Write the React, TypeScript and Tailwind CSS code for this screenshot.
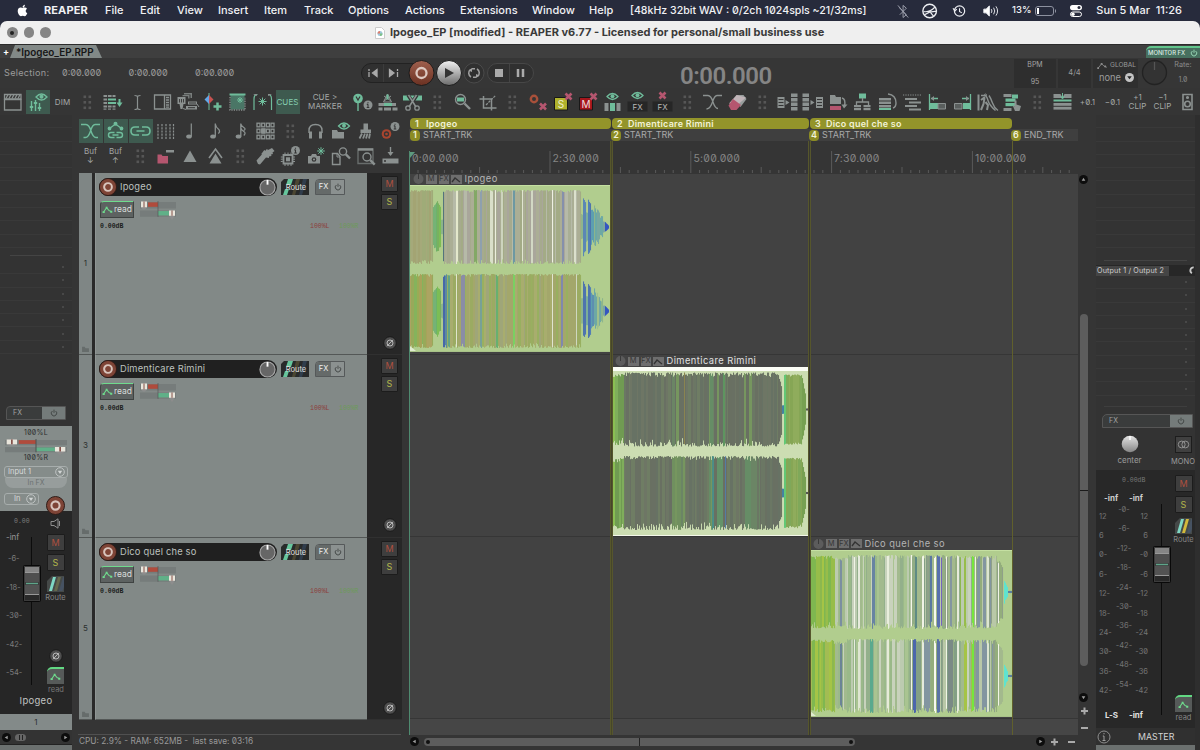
import React from "react";

const G = "#8b9190";
const T = "#6fbc9b";
const R = "#b5566f";
const BG = "#353535";

/* ---------- toolbar icons (25 x 24 cells) ---------- */

const info = (x: number, y: number, r = 4.5) => (
  <g>
    <circle cx={x} cy={y} r={r} fill={G} />
    <path d={`M${x} ${y - 0.8}v3.2M${x - 1.2} ${y - 0.6}h1.2M${x - 1.3} ${y + 2.5}h2.6M${x} ${y - 2.8}v1.1`} stroke={BG} strokeWidth="1.1" fill="none" />
  </g>
);
const eye = (x: number, y: number) => (
  <g>
    <path d={`M${x - 5.5} ${y}q5.5 -6 11 0q-5.5 6 -11 0z`} fill="none" stroke={T} strokeWidth="1.3" />
    <circle cx={x} cy={y - 0.3} r="2" fill={T} />
  </g>
);
const cross = (x: number, y: number) => <path d={`M${x - 3} ${y - 3}l6 6M${x + 3} ${y - 3}l-6 6`} stroke={R} strokeWidth="2.6" />;
const star = (x: number, y: number, r: number) => (
  <path d={`M${x - r} ${y}h${2 * r}M${x} ${y - r}v${2 * r}M${x - r * 0.7} ${y - r * 0.7}l${r * 1.4} ${r * 1.4}M${x + r * 0.7} ${y - r * 0.7}l${-r * 1.4} ${r * 1.4}`} stroke={T} strokeWidth="1" />
);
const mag = (x: number, y: number, r: number, c = G) => (
  <g stroke={c} fill="none">
    <circle cx={x} cy={y} r={r} strokeWidth="1.4" />
    <path d={`M${x + r * 0.8} ${y + r * 0.8}l${r + 0.5} ${r + 0.5}`} strokeWidth="2.4" />
  </g>
);
const rows = (x: number, w: number, ys: number[], h: number, fill = G) => ys.map((y) => <rect key={`${x}-${y}`} x={x} y={y} width={w} height={h} fill={fill} />);

const icons: Record<string, React.ReactNode> = {
  dots: <g fill="#565656">{[7, 12.5, 18].map((y) => [8.5, 13.5].map((x) => <rect key={`${x}${y}`} x={x} y={y - 1.5} width="2.6" height="2.6" />))}</g>,
  clap: (
    <g fill="none" stroke={G} strokeWidth="1.3">
      <path d="M4.500 9.500h16.500v10.500h-16.500z" />
      <path d="M4.500 9V4.500H21V9z" />
      <path d="M6 8.500l2-4M9 8.500l2-4M12 8.500l2-4M15 8.500l2-4M18 8.500l2-4" />
    </g>
  ),
  mixer: (
    <g>
      {eye(16.5, 7)}
      <path d="M6.500 11v10M10.500 10v11M14.500 13v8" stroke={T} strokeWidth="1.4" />
      <path d="M4.800 17h3.400M8.800 13h3.400M12.800 18h3.400" stroke={T} strokeWidth="2.200" />
    </g>
  ),
  gridDown: (
    <g>
      {rows(3.5, 3.6, [5, 8.5, 12, 15.5], 2)}
      {rows(8, 3.6, [5, 15.5], 2)}
      {rows(12.5, 3, [5, 15.5], 2)}
      {rows(8, 8, [8.5, 12], 2, T)}
      {rows(3.5, 3, [18.5], 1.2)}
      {rows(8, 3, [18.5], 1.2)}
      {rows(12.5, 3, [18.5], 1.2)}
      <path d="M19.500 9v4" stroke={T} strokeWidth="2" />
      <path d="M16.500 12.500h6l-3 4.500z" fill={T} />
    </g>
  ),
  ibeam: <path d="M9.500 5.500q3 0 3 1.500v11q0 1.500-3 1.500M15.500 5.500q-3 0-3 1.500M15.500 19.500q-3 0-3-1.500" stroke={G} strokeWidth="1.200" fill="none" />,
  panel: (
    <g fill="none" stroke={G} strokeWidth="1.300">
      <path d="M4.500 5h16v14h-16z" />
      <path d="M14.500 5v14" />
      <path d="M16 7.500h3M16 10h3M16 12.500h3M16 15h3M16 17.200h3" />
    </g>
  ),
  routing: (
    <g fill={G}>
      <path d="M9 3h8v5h-1.500V4.500H9zM7.500 5h7v3.500h-1.400V6.300H7.500z" opacity=".8" />
      <path d="M2.500 7h8v7h-2l-1 5H5.500l-1-5h-2z" />
      <path d="M4.500 9v3.500M6.500 9v3.500M8.500 9v3.500" stroke={BG} strokeWidth=".9" />
      <path d="M13 11.500h9v3h-9zM11 16h11v3.500H11z" />
      <path d="M14 13h7M13 17.700h7" stroke={BG} strokeWidth="1" />
      <path d="M8 18.500l3 1M22 14l2 3" stroke={G} />
    </g>
  ),
  marker: (
    <g>
      <path d="M9 3v17" stroke={T} strokeWidth="1" />
      <path d="M9 5v9L4.500 9.500z" fill="#63a7e8" />
      <path d="M9 5v9l4.500-4.500z" fill="#c65250" />
      <path d="M17.500 12.500v8M13.500 16.500h8" stroke={T} strokeWidth="2.500" />
    </g>
  ),
  selStar: (
    <g>
      <path d="M5.500 4.500h14v15h-14z" fill="#4a7666" />
      <path d="M4.500 4.500h16" stroke={T} strokeWidth="2" />
      <path d="M5 7v13h15V7" stroke={G} fill="none" strokeWidth="1.300" strokeDasharray="1.200 1.200" />
      {star(15, 10, 3)}
    </g>
  ),
  brackets: (
    <g>
      <path d="M7.500 4.500Q4 4.500 4 9v11M18 4.500q3.500 0 3.500 4.500v11" stroke={T} fill="none" strokeWidth="1.200" />
      <path d="M3 4h4v2zM22 4h-4v2z" fill={G} />
      {star(12.5, 11.5, 4)}
    </g>
  ),
  pinInfo: (
    <g>
      <circle cx="8" cy="8.500" r="4.800" fill={T} />
      <path d="M8 13v8" stroke={T} strokeWidth="1.400" fill="none" />
      <path d="M6 6.500l2 3.500 2-3.500" stroke={BG} strokeWidth="1.200" fill="none" />
      {info(18, 15)}
    </g>
  ),
  blocksUp: (
    <g>
      <path d="M3.500 13h9v3h-9zM14 13h7v3h-7zM3.500 17.500h4v3h-4zM9 17.500h7v3H9zM17.500 17.500h5v3h-5z" fill={G} />
      <path d="M9 13h8v3H9z" fill={T} />
      <path d="M12.500 4l4 8h-8zM9 6l7 5M16 6l-7 5" stroke={G} fill="none" />
      <path d="M12.500 4.500v5" stroke={T} strokeWidth="2" />
    </g>
  ),
  scissors: (
    <g>
      <path d="M3 5.500h19v5H3z" fill={T} />
      <path d="M8 5l8.500 13M17 5L8.500 18" stroke={BG} strokeWidth="3.500" />
      <path d="M8.500 5l7.500 12M16.500 5L9 17" stroke={G} strokeWidth="1.500" />
      <circle cx="8" cy="18" r="2.200" fill="none" stroke={G} strokeWidth="1.300" />
      <circle cx="17" cy="18" r="2.200" fill="none" stroke={G} strokeWidth="1.300" />
    </g>
  ),
  zoomSel: (
    <g>
      {mag(10.5, 9.5, 5)}
      <path d="M7 7.500h7v4H7z" fill={T} />
    </g>
  ),
  crop: (
    <g>
      <path d="M8.500 6v12h13M4.500 9h12v11.500" stroke={G} strokeWidth="1.500" fill="none" />
      <path d="M11 15l9.500-9.500" stroke={G} strokeWidth="1.200" strokeDasharray="2.500 1" />
    </g>
  ),
  recX: (
    <g>
      <circle cx="9" cy="9" r="3.200" fill="none" stroke="#a8503a" strokeWidth="2.400" />
      {cross(18, 16.5)}
    </g>
  ),
  soloX: (
    <g>
      <path d="M4.500 7.500h13v12.500h-13z" fill="#b0b22c" stroke="#181818" />
      <text x="11" y="17.500" fontSize="10" textAnchor="middle" fill="#eeeed0">S</text>
      {cross(18.5, 6.5)}
    </g>
  ),
  muteX: (
    <g>
      <path d="M4.500 7.500h13v12.500h-13z" fill="#a5161c" stroke="#181818" />
      <text x="11" y="17.500" fontSize="10" textAnchor="middle" fill="#f0dcdc">M</text>
      {cross(18.5, 6.5)}
    </g>
  ),
  eyeCols: (
    <g>
      {eye(12.5, 6.5)}
      <path d="M4.500 13h4v8h-4z" fill={G} />
      <path d="M10 13h5v8h-5z" fill={T} />
      <path d="M16.500 13h4v8h-4z" fill={G} />
    </g>
  ),
  eyeFx: (
    <g>
      {eye(12.5, 5.5)}
      <path d="M2.500 11.500h20v10h-20z" fill="#262626" />
      <text x="12.500" y="19.700" fontSize="8" textAnchor="middle" fill="#b8b8b8">FX</text>
    </g>
  ),
  crossFx: (
    <g>
      {cross(12.5, 5.5)}
      <path d="M2.500 11.500h20v10h-20z" fill="#262626" />
      <text x="12.500" y="19.700" fontSize="8" textAnchor="middle" fill="#b8b8b8">FX</text>
    </g>
  ),
  xfade: <path d="M3 5.500h5q3 0 5 6.500t5 6.500M22 5.500h-5q-2.500 0-4.500 6.500T6.500 19" stroke={G} strokeWidth="1.300" fill="none" />,
  xfadeOn: <path d="M3 5.500h5q3 0 5 6.500t5 6.500h2M22 5.500h-5q-2.500 0-4.500 6.500T7.500 18.500h-2" stroke={T} strokeWidth="1.400" fill="none" />,
  eraser: (
    <g>
      <path d="M11.500 5h7l3 4-6 8-2-2z" fill="#979d9c" />
      <path d="M11.500 5L4 13.500l8.500 1.500L21 7.500z" fill="#c0b4b8" />
      <path d="M8 9l-4.500 6.500L6 20h5.500l4.500-5z" fill={R} />
    </g>
  ),
  fan: (
    <g>
      <path d="M2.500 7h7v11h-7z" fill={G} />
      <path d="M3.500 9.500h5M3.500 12.500h5M3.500 15.500h5" stroke={BG} />
      <path d="M10.500 10l4 2.500-4 2.500z" fill={G} />
      {rows(16, 6.5, [3.5, 8, 12.5, 17], 3.5)}
    </g>
  ),
  fanIn: (
    <g>
      {rows(2.5, 6.5, [3.5, 8, 12.5, 17], 3.5)}
      <path d="M10.500 10l4 2.500-4 2.500z" fill={G} />
      <path d="M16 7h7v11h-7z" fill={G} />
      <path d="M17 9.500h5M17 12.500h5M17 15.500h5" stroke={BG} />
    </g>
  ),
  folderTurn: (
    <g>
      <path d="M5 5h5l1 2h5v7H5z" fill={G} />
      <path d="M5 16h11v4H5z" fill={R} />
      <path d="M17 8q4 1 2.500 8" stroke={G} fill="none" strokeWidth="1.400" />
      <path d="M16.500 14.500h6l-3.500 4z" fill={G} />
    </g>
  ),
  treeUp: (
    <g>
      <path d="M9 3.500h7v5H9z" fill={T} />
      <path d="M12.500 8v4M6.500 15v-3h12v3" stroke={G} fill="none" strokeWidth="1.300" />
      {rows(4, 7, [15, 18], 2.2)}
      {rows(13.5, 7, [15, 18], 2.2)}
    </g>
  ),
  stackTurn: (
    <g>
      {rows(4, 12, [8, 11.5, 15], 2.5)}
      <path d="M4 19h12" stroke={T} strokeWidth="2" />
      <path d="M13 4q8 1 8 9 0 4-3 5" stroke={G} fill="none" strokeWidth="1.400" />
    </g>
  ),
  indent: (
    <g>
      <path d="M3 5h18" stroke={G} strokeDasharray="1.200 1.200" />
      <path d="M5 9h12M9 12.500h12M5 16h12M9 19.500h12" stroke={G} strokeWidth="2" />
    </g>
  ),
  moveL: (
    <g>
      <path d="M4.500 4v16M6 8.500h7" stroke={T} strokeWidth="1.300" />
      <path d="M6 8.500l3-2.500v5z" fill={G} />
      <path d="M5 13h8v6H5z" fill={T} />
      <path d="M13 13.500h7.500v5.500H13z" fill="#5a5f5e" stroke={G} />
    </g>
  ),
  moveR: (
    <g>
      <path d="M20.500 4v16M12 8.500h7" stroke={T} strokeWidth="1.300" />
      <path d="M19 8.500l-3-2.500v5z" fill={G} />
      <path d="M13 13h8v6h-8z" fill={T} />
      <path d="M4.500 13.500H12V19H4.500z" fill="#5a5f5e" stroke={G} />
    </g>
  ),
  keys: (
    <g stroke={G} fill="none">
      <path d="M3.500 4.500v16" strokeWidth="2" />
      <path d="M6 5.500h4q1.500 0 3 5t7.500 10M14 5.500q2 3 3.500 7.500t5.500 7.500" strokeWidth="1.400" />
      <path d="M6 10l4-3M9.500 8l-1 6-2.500 6M10.500 12l2.500 3-1 5" strokeWidth="2" />
      <circle cx="10.500" cy="5" r="1" />
    </g>
  ),
  tapBlocks: (
    <g>
      {rows(3.5, 8, [4, 18], 3, G)}
      {rows(5.5, 10, [8.5, 13], 3.2, T)}
      <path d="M12 4.500h6v4h-6z" fill={T} />
      <path d="M14.500 10.500v6l-2-1.500 2.500 6h4.500l1.500-5-4.500-1.500v-4z" fill={G} />
    </g>
  ),
  insRows: (
    <g>
      <path d="M3.500 4h7l2 3.500L14.500 4h7v4h-18z" fill={G} />
      <path d="M3.500 9.500h18v2h-18z" fill={T} />
      {rows(3.5, 18, [13, 16.8], 2.8)}
      <path d="M12.500 3v5M10.500 6l2 3 2-3" stroke={T} fill="none" />
    </g>
  ),
  speaker: (
    <g fill="none" stroke={G} strokeWidth="1.600">
      <path d="M8 4.500h9v15H8z" />
      <circle cx="12.500" cy="14" r="2.800" />
      <circle cx="12.500" cy="7.500" r=".8" />
    </g>
  ),
  envLink: (
    <g stroke={T} fill="none" strokeWidth="1.400">
      <path d="M6.500 9.500l6-4.500 6 4.500" />
      <path d="M11.500 13.500H8q-2.500 0-2.500 2.500T8 18.500h3.500M13.500 13.500H17q2.500 0 2.500 2.500T17 18.500h-3.500M9.500 16h6" />
      <circle cx="12.500" cy="4.800" r="1.300" fill={T} />
      <circle cx="6.500" cy="9.500" r="1.200" fill={T} />
      <circle cx="18.500" cy="9.500" r="1.200" fill={T} />
    </g>
  ),
  link: <path d="M11 8H7q-4 0-4 4t4 4h4M14 8h4q4 0 4 4t-4 4h-4M8.500 12h8" stroke={T} fill="none" strokeWidth="1.600" />,
  gridLines: <path d="M5 5v15M9 5v15M13 5v15M17 5v15M20.500 5v15" stroke={G} strokeWidth="1.200" strokeDasharray="2.200 1" />,
  quarter: (
    <g>
      <ellipse cx="11" cy="17.500" rx="2.800" ry="2" fill={G} />
      <path d="M13.300 4.500v13" stroke={G} strokeWidth="1.200" />
    </g>
  ),
  eighth: (
    <g>
      <ellipse cx="10" cy="17.500" rx="2.800" ry="2" fill={G} />
      <path d="M12.300 4.500v13M12.300 5q.5 3 3 5t0 4.500" stroke={G} strokeWidth="1.300" fill="none" />
    </g>
  ),
  sixteenth: (
    <g>
      <ellipse cx="10.500" cy="17.500" rx="2.800" ry="2" fill={G} />
      <path d="M12.800 4.500v13M12.800 5q.5 2 3 3.500t0 3M12.800 9q.5 2 3 3.500t0 4" stroke={G} strokeWidth="1.300" fill="none" />
    </g>
  ),
  pads: (
    <g fill="none" stroke={G} strokeWidth="1.300">
      {[6, 12, 18].map((y) => [5.5, 10.2, 14.9, 19.5].map((x) => <rect key={`${x}${y}`} x={x - 1.5} y={y - 1.8} width="3" height="3.600" />))}
      <rect x="9" y="10" width="3" height="4" fill={G} />
    </g>
  ),
  phones: (
    <g stroke={G} fill="none">
      <path d="M6 14v-2.500q0-6 6.500-6t6.500 6V14" strokeWidth="1.400" />
      <path d="M7.500 12.500v7M17.500 12.500v7" strokeWidth="3" />
    </g>
  ),
  folderEye: (
    <g>
      <path d="M4 11h5l1 2h6v6.500H4z" fill={G} />
      {eye(16, 7)}
    </g>
  ),
  brush: (
    <g fill={G}>
      <path d="M10.500 4.500h4.500v6h3v3.500H7.500v-3.500h3z" />
      <path d="M9 14.500l-2.500 5M12 14.500l-2 5M14.500 14.500l-1.500 5M17 14.500l-1 5" stroke={G} strokeWidth="1.800" />
    </g>
  ),
  recInfo: (
    <g>
      <circle cx="8.500" cy="15" r="4.800" fill="#a8452f" />
      <circle cx="8.500" cy="15" r="2" fill="none" stroke={BG} strokeWidth="1.300" />
      {info(17, 7.5)}
    </g>
  ),
  foldRed: (
    <g>
      <path d="M4.500 10.500h4l1 1.500h5.500v7.500H4.500z" fill={R} />
      <path d="M13 6h8v2.500h-8z" fill={G} />
    </g>
  ),
  tri: <path d="M12 6.500L18.500 18h-13z" fill={G} />,
  triDbl: (
    <g>
      <path d="M12.500 9.500L18.500 19.500h-12z" fill={G} />
      <path d="M6 14l6.500-9 6.500 9" stroke={G} strokeWidth="1.600" fill="none" />
    </g>
  ),
  guitar: (
    <g fill={G}>
      <path d="M3.500 16.500L11 8l8-4 2.500 3-2 1.500.5 1.500-2 .5.500 1.500-2.500.500v1.500l-3-.5-6 7-2-.5z" />
      <path d="M9 10.500l3-4M12 9l2.500-3.500" stroke={G} strokeWidth="1.800" />
    </g>
  ),
  chipInfo: (
    <g>
      <path d="M5.500 11h9v8.500h-9z" fill="none" stroke={G} strokeWidth="1.800" />
      <path d="M8 13.300h4v4H8z" fill={G} />
      <path d="M7 8.500v2M10 8.500v2M13 8.500v2M7 20v2M10 20v2M13 20v2M2.800 13h2M2.800 15.200h2M2.800 17.500h2M15 13h2M15 15.200h2M15 17.500h2" stroke={G} />
      {info(17.5, 6.5)}
    </g>
  ),
  camStar: (
    <g>
      <path d="M5 12h3l1-2h4l1 2h3v7.500H5z" fill={G} />
      <circle cx="11" cy="15.500" r="2.300" fill={BG} />
      <circle cx="11" cy="15.500" r="1.100" fill={G} />
      {star(18, 7, 3.8)}
    </g>
  ),
  docMag: (
    <g>
      <path d="M4.500 9.500h5l2.500 3v8H4.500z" fill="none" stroke={G} strokeWidth="1.400" />
      <path d="M9 10v3h3" fill="none" stroke={G} />
      {mag(15, 7.5, 3.6)}
    </g>
  ),
  winMag: (
    <g>
      <path d="M5 5h15v14.500H5z" fill="none" stroke="#686d6c" strokeWidth="1.400" />
      <path d="M5 5.500h15" stroke={G} strokeWidth="2.400" />
      <circle cx="14" cy="13" r="4.500" fill={BG} />
      {mag(14, 13, 4)}
    </g>
  ),
  dlDrive: (
    <g>
      <path d="M12.500 3v8" stroke={G} strokeWidth="1.400" />
      <path d="M9.500 8h6l-3 4z" fill={G} />
      <path d="M4.500 14.500h16v5h-16z" fill={G} />
      <circle cx="7" cy="17" r="1" fill={BG} />
    </g>
  ),
};

const ON = ["mixer", "xfadeOn", "envLink", "link"];

function Cell({ id }: { id: string }) {
  if (id.startsWith("t:")) {
    const [, a, b] = id.split(":");
    const cues = a === "CUES";
    return (
      <div className={`flex h-6 shrink-0 flex-col items-center justify-center ${a === "CUE >" ? "w-[50px]" : "w-[25px]"}`}>
        <div className={`flex flex-col items-center justify-center text-[8px] leading-[9px] tracking-[0.1px] whitespace-nowrap ${cues ? "h-6 w-6 bg-[#3e5a4f] text-[#84cdb0]" : "text-[#a4a8a7]"}`}>
          <span>{a}</span>
          {b && <span>{b}</span>}
        </div>
      </div>
    );
  }
  return (
    <div className="flex h-6 w-[25px] shrink-0 items-center justify-center">
      <div className={`flex h-6 w-6 items-center justify-center ${ON.includes(id) ? "bg-[#3e5a4f]" : ""}`}>
        <svg viewBox="0 0 25 24" className="h-6 w-[25px] shrink-0">{icons[id]}</svg>
      </div>
    </div>
  );
}

const row1 = ["clap", "mixer", "t:DIM", "dots", "gridDown", "ibeam", "panel", "routing", "marker", "selStar", "brackets", "t:CUES", "t:CUE >:MARKER", "pinInfo", "blocksUp", "scissors", "dots", "zoomSel", "crop", "dots", "recX", "soloX", "muteX", "eyeCols", "eyeFx", "crossFx", "dots", "xfade", "eraser", "dots", "fan", "fanIn", "folderTurn", "treeUp", "stackTurn", "indent", "moveL", "moveR", "keys", "tapBlocks", "dots", "insRows", "t:+0.1", "t:−0.1", "t:+1:CLIP", "t:−1:CLIP", "speaker"];
const row2 = ["xfadeOn", "envLink", "link", "gridLines", "quarter", "eighth", "sixteenth", "pads", "dots", "phones", "folderEye", "brush", "recInfo"];
const row3 = ["t:Buf:↓", "t:Buf:↑", "dots", "foldRed", "tri", "triDbl", "dots", "guitar", "chipInfo", "camStar", "docMag", "winMag", "dlDrive"];

/* ---------- small controls ---------- */

const Rec = ({ size = 17 }: { size?: number }) => (
  <svg viewBox="0 0 20 20" style={{ width: size, height: size }} className="shrink-0">
    <circle cx="10" cy="10" r="9.500" fill="#7e4436" stroke="#2b1a16" />
    <circle cx="10" cy="10" r="4.300" fill="none" stroke="#d8c4bc" strokeWidth="2.200" />
  </svg>
);
const Power = ({ c = "#3d4241" }: { c?: string }) => (
  <svg viewBox="0 0 10 10" className="h-[8px] w-[8px]">
    <path d="M3 2.500a3.400 3.400 0 1 0 4 0M5 .8v4" stroke={c} fill="none" strokeWidth="1.100" />
  </svg>
);
const Sq = ({ t, big }: { t: "M" | "S"; big?: boolean }) => (
  <div className={`flex items-center justify-center rounded-[1px] border border-[#1c1c1c] bg-[#3e3e3e] ${t === "M" ? "text-[#b0503f]" : "text-[#b3b64b]"} ${big ? "h-[17px] w-[18px] text-[9px]" : "h-4 w-[17px] text-[9px]"}`}>{t}</div>
);
const Phase = () => (
  <svg viewBox="0 0 14 14" className="h-[14px] w-[14px]">
    <circle cx="7" cy="7" r="6.300" fill="#4e4e4e" stroke="#1a1a1a" />
    <circle cx="7" cy="7" r="3" fill="none" stroke="#b8b8b8" />
    <path d="M4 10.200l6-6.400" stroke="#b8b8b8" />
  </svg>
);
const Env = () => (
  <svg viewBox="0 0 12 10" className="h-[9px] w-[11px] shrink-0">
    <path d="M1.500 8L5 3l2.500 3L10.500 7.500" fill="none" stroke="#6fdb8d" strokeWidth="1.200" />
    <path d="M.5 7h2.500v2H.5zM4 2h2v2H4zM9 6.500h2.300v2H9z" fill="#6fdb8d" />
  </svg>
);
const ReadSq = () => (
  <div className="flex h-[17px] w-[17px] items-center justify-center rounded-tl-[5px] border-t-2 border-[#62d983] bg-[#565a59]"><Env /></div>
);
const RouteSq = ({ bright }: { bright?: boolean }) => (
  <svg viewBox="0 0 18 16" className="h-4 w-[18px]">
    <path d="M5 0h12v16H0V5z" fill="#454948" />
    <path d="M2 15L6 1h3L5 15z" fill="#7fd8c4" />
    <path d="M7 15l4-14h3l-4 14z" fill={bright ? "#d3b93b" : "#66684c"} />
    <path d="M12 15l4-14h1v10l-1.500 4z" fill="#465262" />
  </svg>
);
const Pan = ({ w, h }: { w: number; h: number }) => (
  <svg viewBox="0 0 36 18" style={{ width: w, height: h }} preserveAspectRatio="none">
    <path d="M0 1h36v6H0zM0 9h36v6H0z" fill="#767c7b" />
    <path d="M8 1.300h10v4.200H8z" fill="#b04b3c" />
    <path d="M18 9.500h11v4.200H18z" fill="#60b088" />
    <path d="M18 0v15" stroke="#4e5352" strokeWidth=".6" />
    <path d="M1 .5h6v6l-2 1.500H3L1 6.500zM29 9h6v5l-3 4-3-4z" fill="#8d8d8d" />
    <path d="M1 .5h6v5.500H1zM29 9h6v5h-6z" fill="#e9e6dc" />
    <path d="M4 .5v5.500M32 9v5" stroke="#6c2c26" strokeWidth=".8" />
  </svg>
);
const Fader = () => (
  <svg viewBox="0 0 18 37" className="h-[37px] w-[18px]">
    <rect x=".5" y=".5" width="17" height="36" rx="1" fill="#3c3c3c" stroke="#090909" />
    <path d="M2 2h14v5H2z" fill="#858585" />
    <path d="M2 8h14v9H2z" fill="#4f4f4f" />
    <path d="M2 20h14v9H2z" fill="#535353" />
    <path d="M2 30h14v5H2z" fill="#292929" />
    <path d="M2 7.500h14M2 29.500h14" stroke="#b0b0b0" strokeWidth=".8" />
    <path d="M3 18.500h12" stroke="#5ea58a" strokeWidth="1.400" />
  </svg>
);
const Arrow = ({ d }: { d: "l" | "r" | "u" | "d" }) => (
  <svg viewBox="0 0 10 10" className="h-[9px] w-[9px] shrink-0">
    <circle cx="5" cy="5" r="5" fill="#0d0d0d" />
    <path d={{ l: "M6.300 3v4L3 5z", r: "M3.700 3v4L7 5z", u: "M3 6.300h4L5 3z", d: "M3 3.700h4L5 7z" }[d]} fill="#a0a0a0" />
  </svg>
);
const Drop = () => (
  <svg viewBox="0 0 10 10" className="h-[10px] w-[10px]">
    <circle cx="5" cy="5" r="4.300" fill="none" stroke="#bfc4c3" />
    <path d="M2.800 3.800h4.400L5 7z" fill="#d2d6d5" />
  </svg>
);

/* ---------- waveforms ---------- */

function rng(seed: number) {
  let s = seed;
  return () => {
    s = (s * 1664525 + 1013904223) % 4294967296;
    return s / 4294967296;
  };
}
type Seg = { to: number; a: number; b?: number; j?: number; p: string[] };
function Channel({ segs, seed, cy, h, accents, jag }: { segs: Seg[]; seed: number; cy: number; h: number; accents: [number, number, string][]; jag: number }) {
  const r = rng(seed);
  const out: React.ReactNode[] = [];
  let x = 0;
  for (const s of segs) {
    const from = x;
    const j = s.j ?? jag;
    while (x < s.to) {
      const w = Math.min(s.to - x, 1 + Math.floor(r() * 3));
      const c = s.p[Math.floor(r() * s.p.length)];
      for (let i = 0; i < w; i++) {
        const f = (x + i - from) / (s.to - from);
        const amp = s.a + ((s.b ?? s.a) - s.a) * f;
        const up = amp * h * (1 - r() * r() * j * 0.6);
        const dn = amp * h * (1 - r() * r() * j);
        const ac = accents.find(([ax, aw]) => x + i >= ax && x + i < ax + aw);
        if (amp > 0) out.push(<rect key={x + i} x={x + i} y={cy - up} width="1.050" height={up + dn} fill={ac ? ac[2] : c} />);
      }
      x += w;
    }
  }
  return <g>{out}</g>;
}

const tan = ["#a5a97a", "#a3a473", "#a6b07f", "#9fab78"];
const gold = ["#a7a35a", "#9aab55", "#aca462", "#85b35c", "#98a95a"];
const mist = ["#abae95", "#a6aa8e", "#a9a69b", "#a3ab86", "#b6baa8", "#a9af95"];
const moss = ["#9bab62", "#a3a76b", "#98b060", "#9fa679", "#a8ad6e"];
const slate = ["#6b7764", "#697063", "#6f7d64", "#677264", "#6e7665", "#697062"];
const fern = ["#70905f", "#6b8565", "#76965f", "#668d66"];
const lime = ["#97bd4a", "#a5c446", "#8cb84f", "#a3bc53", "#7fb750"];
const pale = ["#a9c491", "#bccbb0", "#9ab989", "#a2ba8e", "#c8d2bc", "#93b08b"];
const blueish = ["#93ad85", "#839f85", "#a3b98d", "#8396a0", "#b9c8a8", "#93ad7c", "#8fa088"];

const tailSegs: Seg[] = [
  { to: 173, a: 0.35, j: 0.3, p: ["#8fb58c"] },
  { to: 176, a: 0.8, b: 0.62, j: 0.2, p: ["#5b87b5", "#4e74ae"] },
  { to: 178, a: 0.4, j: 0.3, p: ["#7cae98"] },
  { to: 181, a: 0.74, b: 0.6, j: 0.15, p: ["#4e74ae", "#527fb6"] },
  { to: 184, a: 0.5, b: 0.4, j: 0.3, p: ["#5d9fb0", "#5d8fb0"] },
  { to: 187, a: 0.62, b: 0.3, j: 0.5, p: ["#6da8a5", "#8cb58c"] },
  { to: 190, a: 0.5, b: 0.38, j: 0.5, p: ["#79a8a0", "#9fc08c"] },
  { to: 193, a: 0.3, b: 0.4, j: 0.6, p: ["#6da8a5", "#8cb58c"] },
  { to: 195, a: 0.15, j: 0.3, p: ["#7ba5a0"] },
  { to: 199, a: 0.13, b: 0.02, p: ["#3456c0"] },
];
const c1: Seg[] = [
  { to: 23, a: 1, p: tan },
  { to: 27, a: 0.55, b: 0.7, p: ["#76b276", "#6cb36a"] },
  { to: 31, a: 0.7, b: 0.5, p: ["#7cbd55", "#79b060"] },
  { to: 33, a: 0.2, p: ["#8db58a"] },
  { to: 34, a: 0.98, p: ["#54747c"] },
  { to: 171, a: 1, p: mist },
  ...tailSegs,
];
const c1b: Seg[] = c1.map((s, i) => (i === 0 ? { ...s, p: gold } : i === 5 ? { ...s, p: moss } : s));
const c2: Seg[] = [
  { to: 3, a: 0.9, p: ["#8abf52"] }, { to: 12, a: 0.96, p: ["#709b52", "#7fae5b"] }, { to: 60, a: 1, p: slate }, { to: 74, a: 1, p: [...slate, ...fern] }, { to: 92, a: 1, p: slate }, { to: 108, a: 1, p: fern.concat(slate) },
  { to: 130, a: 1, p: slate }, { to: 148, a: 1, p: fern.concat(slate) }, { to: 166, a: 1, p: slate }, { to: 170, a: 0.98, b: 0.6, p: slate }, { to: 172, a: 0.12, p: ["#4682a0"] },
  { to: 190, a: 0.95, j: 0.12, p: ["#86a655", "#7fa85a", "#8fac5c"] }, { to: 194, a: 0.85, b: 0.3, j: 0.1, p: ["#76a052"] }, { to: 196, a: 0.03, p: ["#555"] },
];
const c3: Seg[] = [
  { to: 25, a: 0.98, p: lime }, { to: 37, a: 0.93, p: pale }, { to: 100, a: 1, p: pale }, { to: 148, a: 1, p: blueish }, { to: 164, a: 0.97, p: lime.concat(pale) }, { to: 187, a: 0.98, p: blueish }, { to: 193, a: 0.9, b: 0.7, p: blueish },
  { to: 194, a: 0, p: ["#fff"] }, { to: 198, a: 0.32, b: 0.08, p: ["#5fe3cf"] }, { to: 202, a: 0.03, p: ["#5a7fa0"] },
];

const items = [
  {
    n: 1, name: "Ipogeo", left: 1, w: 200, pt: 12, h: 167, bg: "#b1cd8e", c: [42, 126], h2: 37, top: c1, bot: c1b, seed: 7, jag: 0.14,
    at: [[46, 2, "#e4e8cc"], [64, 3, "#83a866"], [70, 2, "#8ea0ae"], [80, 3, "#d9dfc9"], [85, 1, "#eceedd"], [91, 2, "#cdd4bd"], [103, 2, "#6d98a2"], [112, 1, "#e0e5d0"], [121, 2, "#d2d8c4"], [142, 1, "#eef0e2"], [152, 2, "#8590ac"], [164, 2, "#dbe0cc"]],
    ab: [[33, 2, "#4768a8"], [35, 2, "#5b8aa0"], [38, 2, "#62a385"], [46, 1, "#e0e4cc"], [51, 4, "#8a8da6"], [70, 2, "#78a196"], [86, 2, "#67b070"], [103, 2, "#7ad062"], [142, 1, "#dfe4d0"], [151, 2, "#8088ae"], [166, 1, "#ced7c0"]],
  },
  {
    n: 3, name: "Dimenticare Rimini", left: 203, w: 197, pt: 12, h: 169, bg: "#ccddb2", c: [42.5, 126], h2: 37, top: c2, bot: c2, seed: 21, jag: 0.24,
    at: [[0, 1, "#a5c944"], [72, 1, "#8a8450"], [111, 2, "#5e9560"], [172, 2, "#62c775"]],
    ab: [[0, 1, "#4a91a5"], [100, 2, "#4c8e86"], [105, 6, "#64936a"], [113, 1, "#557ba5"], [172, 2, "#62c775"]],
  },
  {
    n: 5, name: "Dico quel che so", left: 401, w: 202, pt: 13, h: 167, bg: "#b1cd8e", c: [42, 126], h2: 37, top: c3, bot: c3, seed: 33, jag: 0.22,
    at: [[30, 2, "#7b8fa0"], [44, 1, "#f0f3e6"], [48, 2, "#e6ebdc"], [62, 3, "#6883a2"], [77, 2, "#e9eedd"], [101, 1, "#f4f6ea"], [105, 2, "#5f8a84"], [112, 2, "#f0f3e6"], [120, 2, "#5a78a0"], [124, 2, "#f6f8ee"], [127, 3, "#586fae"], [131, 1, "#7564c0"], [136, 1, "#f0f3e6"], [147, 2, "#e6ebdc"], [162, 2, "#76e63c"], [165, 1, "#eef6da"], [177, 2, "#dde6d2"], [188, 1, "#f0f3e6"]],
    ab: [[30, 2, "#6b8496"], [44, 1, "#e6ebdc"], [48, 2, "#dfe6d2"], [60, 3, "#5aa98e"], [77, 2, "#e6ebd8"], [101, 1, "#f0f3e6"], [103, 3, "#4b66ac"], [112, 2, "#e6ebdc"], [124, 2, "#f6f8ee"], [127, 3, "#5a73a4"], [136, 1, "#f0f3e6"], [138, 5, "#7b8a86"], [147, 2, "#e6ebdc"], [162, 2, "#76e63c"], [177, 2, "#dde6d2"], [188, 1, "#f0f3e6"]],
  },
];

/* ---------- track control panel ---------- */

function Track({ n, name }: { n: number; name: string }) {
  return (
    <div className={`flex w-[323px] ${n === 3 ? "h-[183px]" : "h-[182px]"}`}>
      <div className="flex w-[13px] flex-col items-center border-b border-[#535756] bg-[#7f8685] pt-[83px] text-[8px] leading-[14px] text-[#2b2f2e]">
        {n}
        <svg viewBox="0 0 8 7" className="mt-[76px] h-[6px] w-[7px]"><path d="M0 1h3l1 1.500h4V7H0z" fill="#666c6b" /></svg>
      </div>
      <div className="w-[3px] bg-[#2a2a2a]" />
      <div className="flex w-[272px] flex-col border-b border-l border-[#535756] border-l-[#909695] bg-[#828987] pl-[3px]">
        <div className="mt-[5px] flex h-[18px] items-center">
          <div className="flex h-[18px] w-[178px] items-center rounded-full bg-[#202020] pr-px">
            <Rec size={18} />
            <span className="ml-[3px] grow text-[9.3px] tracking-[0.2px] text-[#bdc0bf]">{name}</span>
            <svg viewBox="0 0 18 18" className="h-[17px] w-[17px]"><circle cx="9" cy="9" r="8" fill="#666" stroke="#a8a8a8" strokeWidth="1.200" /><path d="M9 1v5" stroke="#fff" strokeWidth="2" /></svg>
          </div>
          <div className="ml-[4px] flex h-4 w-[28px]">
            <svg viewBox="0 0 28 16" className="h-4 w-7">
              <path d="M3 0h25v16H0V3z" fill="#282a2a" />
              <path d="M5 6l2-6h5l-2 6zM2 16l2-6h4l-2 6z" fill="#66c59c" />
              <path d="M15 0h4l-5 16h-3z" fill="#4b4632" />
              <path d="M22 0h4l-5 16h-3z" fill="#303d4c" />
              <text x="15" y="11.300" fontSize="7.500" textAnchor="middle" fill="#e0e0e0">Route</text>
            </svg>
          </div>
          <div className="ml-[6px] flex h-4 w-[30px] overflow-hidden rounded-tl-[4px] border border-[#55595a] bg-[#8b9190]">
            <div className="flex w-[15px] items-center justify-center bg-[#656a69] text-[7.5px] text-[#eee]">FX</div>
            <div className="flex grow items-center justify-center"><Power /></div>
          </div>
        </div>
        <div className="mt-[5px] flex h-[17px] items-start">
          <div className="ml-px flex h-[17px] w-[34px] items-center justify-center gap-px rounded-tl-[4px] border border-[#3f4342] border-t-[#6fdb8d] bg-[#5d6261] text-[8.5px] text-[#dadddc]"><Env />read</div>
          <div className="ml-[6px]"><Pan w={36} h={19} /></div>
        </div>
        <div className="mt-[4px] flex h-[10px] items-center pl-px font-['Liberation_Mono'] text-[6.5px] font-bold text-[#1b1e1d]">
          <span className="w-[210px]">0.00dB</span>
          <span className="w-[29px] font-normal text-[#8c3f3c]">100%L</span>
          <span className="font-normal text-[#6d9a5a]">100%R</span>
        </div>
      </div>
      <div className="flex w-[35px] flex-col items-center border-b border-[#303030] bg-[#272727] pt-[3px] pl-[10px]">
        <Sq t="M" />
        <div className="h-[2px]" />
        <Sq t="S" />
        <div className="mt-[126px]"><Phase /></div>
      </div>
    </div>
  );
}

/* ---------- mixer pieces ---------- */

const Slots = ({ n, dots }: { n: number; dots?: boolean }) => (
  <>
    {Array.from({ length: n }, (_, i) => (
      <div key={i} className="flex h-[13.3px] items-center justify-end border-b border-[#393939] bg-[#333333] pr-[8px]">
        {dots && <div className="h-[2px] w-[2px] bg-[#484848]" />}
      </div>
    ))}
  </>
);

function Strip() {
  return (
    <div className="flex w-[72px] shrink-0 flex-col bg-[#333333]">
      <div className="h-[137px] overflow-hidden"><Slots n={11} /></div>
      <div className="mx-[10px] h-[4px] border-b border-[#444]" />
      <div className="mt-[5px] h-[145px] overflow-hidden"><Slots n={7} dots /></div>
      <div className="ml-[6px] flex h-[14px] w-[60px] shrink-0 items-center rounded-tl-[4px] border border-[#555] bg-[#3a3c3c] text-[7px] text-[#a0a3a2]">
        <span className="w-[35px] pl-[6px]">FX</span>
        <div className="flex h-full grow items-center justify-center bg-[#747b7a]"><Power /></div>
      </div>
      <div className="mt-[6px] flex h-[85px] flex-col bg-[#858c8a] text-[#2b2e2d]">
        <div className="pt-[2px] text-center text-[7px] leading-[9px] tracking-[0.3px]">100%L</div>
        <div className="mt-[2px] flex h-[15px] justify-center"><Pan w={62} h={16} /></div>
        <div className="text-center text-[7px] leading-[8px] tracking-[0.3px]">100%R</div>
        <div className="mx-[4px] mt-[4px] flex h-3 items-center justify-between rounded-[3px] border border-[#a7adac] pr-[2px] pl-[3px] text-[7.5px] text-[#d8dbda]">Input 1<Drop /></div>
        <div className="mx-[5px] h-[10px] rounded-b-[8px] bg-[#979d9c] text-center text-[7px] leading-[9px] text-[#6c7271]">In FX</div>
        <div className="mt-[5px] ml-[4px] flex h-3 w-[35px] items-center justify-between rounded-[3px] border border-[#a7adac] pr-[2px] pl-[9px] text-[7.5px] text-[#d8dbda]">In<Drop /></div>
      </div>
      <div className="flex h-[203px] flex-col bg-[#262626]">
        <div className="flex h-[174px]">
          <div className="w-[22px] pt-[5px] text-[7.5px] text-[#7d7d7d]">
            <div className="h-[15px] pl-[14px] font-['Liberation_Mono'] text-[6.5px] leading-[11px] whitespace-nowrap">0.00</div>
            <div className="h-[22px] pl-[6px] text-[8px] leading-[12px] text-[#999]">-inf</div>
            {["-6-", "-18-", "-30-", "-42-", "-54-"].map((v, i) => (
              <div key={v} className={`leading-[12px] whitespace-nowrap ${i ? "h-[28.6px] pl-[6px]" : "h-[28.6px] pl-[8px]"}`}>{v}</div>
            ))}
          </div>
          <div className="flex w-[19px] flex-col items-center pt-[26px]">
            <div className="h-[28px] w-px shrink-0 bg-[#0c0c0c]" />
            <div className="shrink-0"><Fader /></div>
            <div className="h-[83px] w-px shrink-0 bg-[#0c0c0c]" />
          </div>
          <div className="flex w-[29px] flex-col items-center">
            <div className="relative -top-[15px] -mb-[15px]"><Rec size={19} /></div>
            <svg viewBox="0 0 12 11" className="mt-[3px] h-[11px] w-3"><path d="M1 3.500h3L8 .8v9.400L4 7.500H1zM9.500 3v5" fill="none" stroke="#8f8f8f" /></svg>
            <div className="mt-[5px]"><Sq t="M" big /></div>
            <div className="mt-[3px]"><Sq t="S" big /></div>
            <div className="mt-[5px]"><RouteSq /></div>
            <div className="text-[7.5px] leading-[11px] text-[#858585]">Route</div>
            <div className="mt-[46px]"><Phase /></div>
            <div className="mt-[4px]"><ReadSq /></div>
          </div>
        </div>
        <div className="h-[10px] pl-[48px] text-[7.5px] leading-[9px] text-[#777]">read</div>
        <div className="text-center text-[9.5px] leading-[12px] tracking-[0.3px] text-[#c0c2c1]">Ipogeo</div>
      </div>
      <div className="h-4 bg-[#838a89] text-center text-[8px] leading-4 text-[#2d302f]">1</div>
      <div className="flex h-[15px] items-center justify-between border-b border-[#222] px-[2px]">
        <div className="flex items-center gap-[4px]"><Arrow d="l" /><div className="flex h-[7px] w-[11px] justify-center gap-[2px] rounded-full bg-[#666] py-px"><div className="w-px bg-[#222]" /><div className="w-px bg-[#222]" /></div></div>
        <Arrow d="r" />
      </div>
      <div className="h-[5px] bg-[#6b706f]" />
    </div>
  );
}

const outer = ["12", "6", "0-", "6-", "12-", "18-", "24-", "30-", "36-", "42-"];
const outerR = ["12", "6", "-0", "-6", "-12", "-18", "-24", "-30", "-36", "-42"];
const inner = ["-0-", "-6-", "-12-", "-18-", "-24-", "-30-", "-36-", "-42-", "-48-", "-54-"];

function Master() {
  return (
    <div className="flex w-[104px] shrink-0 flex-col border-r-[5px] border-[#2e2e2e] bg-[#333333]">
      <div className="h-[142px] overflow-hidden"><Slots n={11} /></div>
      <div className="mx-[8px] h-[4px] border-b border-[#444]" />
      <div className="mt-[4px] flex h-[11px] items-center justify-between bg-[#272727]">
        <div className="h-[10px] w-[73px] bg-[#454545] pl-[1px] text-[7.2px] leading-[10px] tracking-[0.15px] whitespace-nowrap text-[#cfcfcf]">Output 1 / Output 2</div>
        <svg viewBox="0 0 8 10" className="h-[9px] w-[8px]"><path d="M7 1.500a3.500 3.500 0 0 0-2 6.500" stroke="#c8c8c8" strokeWidth="2" fill="none" /></svg>
      </div>
      <div className="h-[130px] overflow-hidden"><Slots n={9} dots /></div>
      <div className="mx-[8px] h-px bg-[#3e3e3e]" />
      <div className="mt-[7px] ml-[6px] flex h-[14px] w-[91px] items-center rounded-tl-[5px] border border-[#565656] bg-[#3a3c3c] text-[7px] text-[#a0a3a2]">
        <span className="w-[67px] pl-[6px]">FX</span>
        <div className="flex h-full grow items-center justify-center bg-[#747b7a]"><Power /></div>
      </div>
      <div className="flex h-[42px] pt-[7px]">
        <div className="flex w-[67px] flex-col items-center text-[8px] leading-[14px] text-[#9b9b9b]">
          <svg viewBox="0 0 18 18" className="h-[18px] w-[18px]">
            <defs><linearGradient id="knob" x1="0" y1="0" x2="0" y2="1"><stop offset="0" stopColor="#e4e4e4" /><stop offset="1" stopColor="#868686" /></linearGradient></defs>
            <circle cx="9" cy="9" r="8.300" fill="url(#knob)" /><path d="M9 1v4" stroke="#fff" strokeWidth="1.500" />
          </svg>
          center
        </div>
        <div className="flex w-[32px] flex-col items-center pl-[8px] text-[7.5px] leading-[14px] text-[#9b9b9b]">
          <div className="mt-px mb-[2px] flex h-[17px] w-[17px] shrink-0 items-center justify-center border border-[#1d1d1d] bg-[#404040]">
            <svg viewBox="0 0 14 10" className="h-[9px] w-[13px]"><circle cx="5" cy="5" r="3.800" fill="none" stroke="#999" /><circle cx="9" cy="5" r="3.800" fill="none" stroke="#999" /></svg>
          </div>
          MONO
        </div>
      </div>
      <div className="flex h-[258px] bg-[#282828]">
        <div className="flex w-[54px] flex-col">
          <div className="pt-[6px] pl-[26px] font-['Liberation_Mono'] text-[6.5px] leading-[10px] whitespace-nowrap text-[#777]">0.00dB</div>
          <div className="flex justify-between pt-[6px] pr-[7px] pl-[8px] text-[8px] leading-3 font-bold text-[#ccc]"><span>-inf</span><span>-inf</span></div>
          <div className="flex h-[204px] text-[7.5px] text-[#757575]">
            <div className="w-[19px] pt-[2.5px] pl-[3px]">{outer.map((v, i) => <div key={i} className="flex h-[19.4px] items-center">{v}</div>)}</div>
            <div className="-mt-[4px] w-[18px]">{inner.map((v, i) => <div key={i} className="flex h-[19.4px] items-center justify-center whitespace-nowrap">{v}</div>)}</div>
            <div className="w-[15px] pt-[2.5px]">{outerR.map((v, i) => <div key={i} className="flex h-[19.4px] items-center justify-end whitespace-nowrap">{v}</div>)}</div>
          </div>
          <div className="flex justify-between pt-px pr-[7px] pl-[9px] text-[8px] leading-3 font-bold whitespace-nowrap text-[#e0e0e0]"><span>L-S</span><span>-inf</span></div>
        </div>
        <div className="flex w-[23px] flex-col items-center pt-[34px]">
          <div className="h-[42px] w-px bg-[#0c0c0c]" />
          <Fader />
          <div className="h-[132px] w-px bg-[#0c0c0c]" />
        </div>
        <div className="flex w-[21px] flex-col items-center pt-[5px] text-[7.5px] leading-[12px] text-[#858585]">
          <Sq t="M" big />
          <div className="h-[4px]" />
          <Sq t="S" big />
          <div className="mt-[5px]"><RouteSq bright /></div>
          <span>Route</span>
          <div className="mt-[149px]"><ReadSq /></div>
          <span>read</span>
        </div>
      </div>
      <div className="flex h-[17px] items-center bg-[#303030]">
        <svg viewBox="0 0 14 14" className="ml-[1px] h-[14px] w-[14px]"><circle cx="7" cy="7" r="6" fill="none" stroke="#8d8d8d" /><path d="M7 6v4.500M5.800 6H7M5.500 10.500h3M7 3v1.300" stroke="#9d9d9d" fill="none" /></svg>
        <span className="ml-[27px] text-[8.8px] leading-[14px] text-[#d4d4d4]">MASTER</span>
      </div>
      <div className="h-[5px] bg-[#6b706f]" />
    </div>
  );
}

/* ---------- arrange view ---------- */

const Badge = ({ n }: { n: number }) => <span className="flex h-[11px] w-[10px] items-center justify-center rounded-[4px] bg-[#8c8c24] text-[9px] font-semibold text-[#f2f2d8]">{n}</span>;

function Ruler() {
  const ticks = Array.from({ length: 76 }, (_, i) => i);
  return (
    <svg viewBox="0 0 669 32" className="h-8 w-[669px] shrink-0 bg-[#353535]">
      {ticks.map((i) => (
        <path key={i} d={`M${(i * 8.8 + 0.2).toFixed(1)} ${i % 16 === 0 ? 9 : i % 8 === 0 ? 25 : 28}V31`} stroke="#5a5a5a" strokeWidth="1" />
      ))}
      {["0:00.000", "2:30.000", "5:00.000", "7:30.000", "10:00.000"].map((t, i) => (
        <text key={t} x={[3, 143.5, 284.5, 425, 566][i]} y="20" fontSize="10.500" letterSpacing="0.200" fill="#858585">{t}</text>
      ))}
      <path d="M0 10h6L1 16z" fill="#5d9a7e" />
    </svg>
  );
}

function Item({ it, i }: { it: (typeof items)[number]; i: number }) {
  return (
    <div className="h-[182px] border-b border-[#363636]" style={{ paddingLeft: it.left }}>
      <div className="flex items-center gap-[2px] pl-[3px] text-[#b4b4b4]" style={{ height: it.pt }}>
        <svg viewBox="0 0 10 10" className="h-[10px] w-[11px]"><circle cx="5" cy="5" r="5" fill="#5c5c5c" /><path d="M5 0v5" stroke="#3a3a3a" /></svg>
        {["M", "FX"].map((t) => <span key={t} className="flex h-[9px] w-[10.5px] items-center justify-center bg-[#6e6e6e] text-[7.5px] text-[#373737]">{t}</span>)}
        <span className="flex h-[9px] w-[10.5px] items-center justify-center bg-[#6e6e6e]"><svg viewBox="0 0 10 9" className="h-[9px] w-[10px]"><path d="M1 7l3-4 2.500 2L9 7" stroke="#333" fill="none" strokeWidth="1.300" /></svg></span>
        <span className={`ml-[1px] text-[9.3px] leading-[12px] tracking-[0.45px] whitespace-nowrap ${i === 1 ? "text-[#e0e0e0]" : ""}`}>{it.name}</span>
      </div>
      <svg viewBox={`0 0 ${it.w} ${it.h}`} style={{ width: it.w, height: it.h }} className="block">
        <rect width={it.w} height={it.h} fill={it.bg} />
        <Channel segs={it.top} seed={it.seed} cy={it.c[0]} h={it.h2} accents={it.at as [number, number, string][]} jag={it.jag} />
        <Channel segs={it.bot} seed={it.seed + 50} cy={it.c[1]} h={it.h2} accents={it.ab as [number, number, string][]} jag={it.jag} />
        <rect width={it.w} height={i === 1 ? 4 : 1} fill={i === 1 ? "#fbfdf6" : "#c5e0a2"} />
        <rect y={it.h - 1} width={it.w} height="1" fill={i === 1 ? "#f4f8ea" : "#a9c389"} />
        {i !== 1 && <path d={`M0 ${it.h - 6}v5h6z`} fill="#e0ebd0" />}
      </svg>
    </div>
  );
}

const regions = [["1", "Ipogeo", "w-[201px]"], ["2", "Dimenticare Rimini", "w-[197px]"], ["3", "Dico quel che so", "w-[202px]"]];

function Arrange() {
  return (
    <div className="relative flex w-[669px] shrink-0 flex-col">
      <div className="mt-[3px] flex h-[11px] shrink-0 gap-px pl-px">
        {regions.map(([n, t, w]) => (
          <div key={n} className={`flex h-[10.5px] items-center rounded-[4px] bg-[#93942a] pl-[5px] text-[9px] font-semibold tracking-[0.25px] text-[#f2f2d6] ${w}`}>
            <span className="w-[11px]">{n}</span>{t}
          </div>
        ))}
      </div>
      <div className="flex h-3 shrink-0 bg-[#3f3f3f] pl-px text-[9px] text-[#a9a9a9]">
        <div className="flex w-[201px] items-center gap-[3px]"><Badge n={1} />START_TRK</div>
        <div className="flex w-[198px] items-center gap-[3px]"><Badge n={2} />START_TRK</div>
        <div className="flex w-[202px] items-center gap-[3px]"><Badge n={4} />START_TRK</div>
        <div className="flex items-center gap-[3px]"><Badge n={6} />END_TRK</div>
      </div>
      <div className="h-px shrink-0" />
      <Ruler />
      <div className="flex h-[561px] flex-col bg-[#424242]">
        <div className="-mt-px">{items.map((it, i) => <Item key={it.n} it={it} i={i} />)}</div>
        <div className="grow bg-[#464646]" />
      </div>
      <div className="absolute top-[36px] bottom-[15px] left-0 w-px bg-[#4f8b70]" />
      <div className="absolute top-[26px] bottom-[15px] left-[201px] w-[3px] border-x border-[#56562c] bg-[#46462a]" />
      <div className="absolute top-[26px] bottom-[15px] left-[399px] w-[3px] border-x border-[#56562c] bg-[#3a3a30]" />
      <div className="absolute top-[26px] bottom-[15px] left-[603px] w-px bg-[#60602c]" />
      <div className="flex h-[13px] items-center">
        <div className="ml-px"><Arrow d="l" /></div>
        <div className="ml-[5px] flex h-[8px] w-[431px] items-center justify-between rounded-full bg-[#5d5d5d] px-[2px]">
          <div className="h-[4px] w-[4px] rounded-full bg-[#111]" /><div className="h-2 w-px bg-[#222]" /><div className="h-[4px] w-[4px] rounded-full bg-[#111]" />
        </div>
        <div className="ml-[181px]"><Arrow d="r" /></div>
        <svg viewBox="0 0 28 8" className="ml-[5px] h-2 w-7"><path d="M1 4h7M4.500 .5v7M18 4h7" stroke="#aaa" strokeWidth="2" /></svg>
      </div>
    </div>
  );
}

function VScroll() {
  return (
    <div className="flex w-[18px] shrink-0 flex-col">
      <div className="flex w-[11px] flex-col items-center">
        <div className="mt-[60px]"><Arrow d="u" /></div>
        <div className="mt-[130px] flex h-[352px] w-[8px] items-center rounded-full bg-[#5d5d5d]"><div className="h-px w-full bg-[#1b1b1b]" /></div>
        <div className="mt-[27px]"><Arrow d="d" /></div>
        <svg viewBox="0 0 8 30" className="mt-[5px] h-[30px] w-2"><path d="M1 4h7M4.500 .5v7M1 21h7" stroke="#aaa" strokeWidth="2" /></svg>
      </div>
    </div>
  );
}

/* ---------- top bars ---------- */

function MenuBar() {
  return (
    <div className="flex h-[21px] shrink-0 items-center bg-[#272b3c] text-[11px] text-[#f0f1f4]">
      <svg viewBox="0 0 384 512" className="ml-[17px] h-[13px] w-[11px]" fill="#fff"><path d="M318.700 268.700c-.2-36.700 16.400-64.400 50-84.800-18.800-26.900-47.200-41.700-84.700-44.600-35.500-2.800-74.300 20.700-88.500 20.700-15 0-49.400-19.700-76.400-19.700C63.300 141.200 4 184.800 4 273.500q0 39.300 14.400 81.200c12.800 36.700 59 126.700 107.200 125.200 25.200-.6 43-17.900 75.800-17.900 31.800 0 48.300 17.900 76.400 17.900 48.600-.7 90.400-82.500 102.600-119.300-65.200-30.700-61.700-90-61.700-91.900zm-56.600-164.200c27.300-32.400 24.800-61.900 24-72.500-24.100 1.400-52 16.400-67.900 34.900-17.500 19.800-27.800 44.300-25.600 71.900 26.100 2 49.900-11.400 69.500-34.300z" /></svg>
      <span className="ml-[16px] w-[61px] font-bold tracking-[0.1px]">REAPER</span>
      {[["File", "w-[35px]"], ["Edit", "w-[37px]"], ["View", "w-[41px]"], ["Insert", "w-[46px]"], ["Item", "w-[40px]"], ["Track", "w-[44px]"], ["Options", "w-[57px]"], ["Actions", "w-[55px]"], ["Extensions", "w-[72px]"], ["Window", "w-[57px]"], ["Help", "w-[41px]"]].map(([t, w]) => <span key={t} className={`font-medium ${w}`}>{t}</span>)}
      <span className="w-[267px] text-[10.6px] font-medium whitespace-nowrap">[48kHz 32bit WAV : 0/2ch 1024spls ~21/32ms]</span>
      <svg viewBox="0 0 120 20" className="h-5 w-[112px] shrink-0" fill="none" stroke="#eceef2">
        <path d="M2 6l8 8-3.500 3V4L10 7l-7 7" stroke="#a0a4b0" /><path d="M1 4l11 13" stroke="#a0a4b0" />
        <circle cx="35" cy="10" r="7.300" strokeWidth="1.500" /><path d="M28.500 10.500q6 1.500 12-4.500M35 10.500l4.500 5.500M29.500 14q6-4 12.500-3.500" strokeWidth="1.300" />
        <circle cx="67" cy="10" r="5.500" strokeWidth="1.300" /><path d="M67 7v3.500l2.500 1.500M60 7l2 3 2-2" strokeWidth="1.200" />
        <path d="M93 8h2.500L99 4.500v11L95.500 12H93z" fill="#fff" /><path d="M101 8q1.500 2 0 4M103.500 6.500q2.500 3.500 0 7M106 5q3.500 5 0 10" />
      </svg>
      <span className="ml-[3px] text-[9.5px] font-medium">13%</span>
      <svg viewBox="0 0 22 10" className="ml-[4px] h-[10px] w-[22px]"><rect x=".5" y=".5" width="18" height="9" rx="2.500" fill="none" stroke="#8d91a0" /><path d="M20.500 3.500v3" stroke="#8d91a0" /><path d="M2 2h2v6H2z" fill="#fff" /></svg>
      <svg viewBox="0 0 14 12" className="ml-[12px] h-3 w-[14px]"><rect x="1" y="0" width="12" height="5.200" rx="2.600" fill="#fff" /><circle cx="10" cy="2.600" r="1.500" fill="#272b3c" /><rect x="1.500" y="7" width="11" height="4.500" rx="2.250" fill="none" stroke="#fff" /><circle cx="4" cy="9.200" r="1.700" fill="#fff" /></svg>
      <span className="ml-[13px] font-medium whitespace-pre">Sun 5 Mar  11:26</span>
    </div>
  );
}

function Transport() {
  return (
    <div className="flex h-[30px] shrink-0 bg-[#363636] text-[#9b9b9b]">
      <div className="flex w-[361px] items-center text-[9.1px]">
        <span className="w-[58px] pl-1 tracking-[0.3px]">Selection:</span>
        {[0, 1, 2].map((i) => <span key={i} className="w-[66.5px] pl-[4px]">0:00.000</span>)}
      </div>
      <svg viewBox="0 0 174 30" className="h-[30px] w-[174px]">
        <defs>
          <linearGradient id="play" x1="0" y1="0" x2="0" y2="1"><stop offset="0" stopColor="#f2f2f2" /><stop offset="1" stopColor="#6b6b6b" /></linearGradient>
          <linearGradient id="rec" x1="0" y1="0" x2="0" y2="1"><stop offset="0" stopColor="#a0604e" /><stop offset="1" stopColor="#6b3122" /></linearGradient>
        </defs>
        <rect x=".5" y="5.500" width="60" height="19" rx="9.500" fill="#303030" stroke="#222" />
        <path d="M22.500 6v18" stroke="#3c3c3c" />
        <path d="M8 11v2M8 14v5M16 11.500v7l-4.500-3.500zM28.500 11.500v7l4.500-3.500zM36.500 11v2M36.500 14v5" fill="#aaa" stroke="#aaa" strokeWidth="1.300" />
        <circle cx="60.500" cy="15" r="12.500" fill="url(#rec)" stroke="#1c1c1c" /><circle cx="60.500" cy="15" r="5" fill="none" stroke="#ddc8c0" strokeWidth="2.300" />
        <circle cx="88" cy="15" r="12.500" fill="url(#play)" stroke="#1c1c1c" /><path d="M84 10v10l9-5z" fill="#333" />
        <circle cx="113" cy="15" r="10" fill="#303030" stroke="#4a4a4a" /><path d="M110 19a4.500 4.500 0 0 1-.500-7.500M116 11a4.500 4.500 0 0 1 .5 7.500M111 10.700h3M112 19.300h3" fill="none" stroke="#a2a2a2" strokeWidth="1.500" /><path d="M107.500 12.500l3.500-2.500v4zM118.500 17.500l-3.500 2.500v-4z" fill="#a2a2a2" />
        <rect x="126.500" y="5.500" width="46" height="19" rx="9.500" fill="#303030" stroke="#474747" /><path d="M148.500 6v18" stroke="#444" />
        <path d="M134 11h8v8h-8z" fill="#aaa" /><path d="M157 11v8M162 11v8" stroke="#aaa" strokeWidth="2.500" />
      </svg>
      <div className="w-[479px] pl-[145px] font-['Roboto'] text-[24px] leading-[36px] font-semibold tracking-[-0.5px] text-[#858585]">0:00.000</div>
      <div className="mt-px flex h-[29px] w-[42px] flex-col items-center justify-between bg-[#2e2e2e] py-[1px] text-[7px] text-[#a4a4a4]"><span>BPM</span><span>95</span></div>
      <div className="mt-px ml-[2px] flex h-[29px] w-[33px] items-center justify-center bg-[#2e2e2e] pb-[2px] text-[7.5px]">4/4</div>
      <div className="mt-px ml-[2px] flex h-[29px] w-[45px] flex-col bg-[#2f2f2f] pt-px pl-[4px] text-[9.3px]">
        <div className="flex items-center gap-[2px] text-[6.6px] leading-[11px]"><svg viewBox="0 0 12 8" className="h-[7px] w-[11px]"><path d="M1 7l4-5 3 3 3 1" stroke="#8c8c8c" fill="none" /><path d="M0 6h2v2H0zM4 1h2v2H4zM8 4h2v2H8z" fill="#8c8c8c" /></svg>GLOBAL</div>
        <div className="flex items-center justify-between pl-[2px] pr-[4px] leading-[13px]">none<svg viewBox="0 0 10 10" className="h-[9px] w-[9px]"><circle cx="5" cy="5" r="5" fill="#c4c4c4" /><path d="M2.500 3.500h5L5 7z" fill="#222" /></svg></div>
      </div>
      <svg viewBox="0 0 30 30" className="ml-[3px] h-[30px] w-[30px]"><circle cx="13.500" cy="14.500" r="12" fill="#333" stroke="#222" strokeWidth="1.300" /><path d="M13.500 4v8" stroke="#555" strokeWidth="1.300" /></svg>
      <div className="flex w-[24px] flex-col items-center justify-around text-[7.3px] text-[#8a8a8a]"><span>Rate:</span><span className="text-[7px]">1.0</span></div>
    </div>
  );
}

export default function App() {
  return (
    <div className="flex h-[750px] w-[1200px] flex-col overflow-hidden bg-[#272b3c] font-['Inter','Roboto',sans-serif] slashed-zero">
      <MenuBar />
      <div className="flex h-[23px] shrink-0 items-center rounded-t-[7px] bg-[#efefef]">
        <div className="flex w-[375px] gap-[6px] pl-[7px]">
          <div className="flex h-[10.5px] w-[10.5px] items-center justify-center rounded-full bg-[#858585]"><div className="h-[4px] w-[4px] rounded-full bg-[#222]" /></div>
          <div className="h-[10.5px] w-[10.5px] rounded-full bg-[#858585]" />
          <div className="h-[10.5px] w-[10.5px] rounded-full bg-[#858585]" />
        </div>
        <svg viewBox="0 0 10 12" className="h-3 w-[10px]"><path d="M.5 .5h6l3 3v8h-9z" fill="#fff" stroke="#ccc" /><circle cx="5" cy="6.500" r="2.500" fill="#9ec7d8" /><path d="M5 4a2.500 2.500 0 0 0-2.500 2.500H5z" fill="#df7c6d" /><path d="M5 9a2.500 2.500 0 0 0 2.500-2.500H5z" fill="#7cc186" /></svg>
        <span className="ml-[5px] text-[11px] font-bold whitespace-nowrap text-[#3a3a3a]">Ipogeo_EP [modified] - REAPER v6.77 - Licensed for personal/small business use</span>
      </div>
      <div className="flex h-[14px] shrink-0 items-end justify-between border-t border-[#2b2b2b] bg-[#3f3f3f]">
        <div className="flex h-[13px] items-center">
          <span className="w-[10px] pl-[3px] text-[9px] leading-[10px] font-bold text-white">+</span>
          <div className="flex h-[13px] w-[92px] items-center bg-[#828987] pl-[6px] text-[9.9px] leading-[12px] font-semibold text-[#161616] [clip-path:polygon(5px_0,86px_0,100%_100%,0_100%)]">*Ipogeo_EP.RPP</div>
        </div>
        <div className="flex h-[12px] w-[54px] items-center justify-between rounded-tl-[5px] border-t-2 border-[#62c58c] bg-[#47705f] px-[2px] text-[5.9px] font-medium whitespace-nowrap text-[#dcebe3]">MONITOR FX<Power c="#9fe0bd" /></div>
      </div>
      <Transport />
      <div className="flex h-[27px] shrink-0 items-center bg-[#353535] pt-px">{row1.map((id, i) => <Cell key={i} id={id} />)}</div>
      <div className="flex h-[635px] shrink-0 bg-[#353535]">
        <Strip />
        <div className="flex w-[337px] shrink-0 flex-col pl-[6px]">
          <div className="mt-1 flex">{row2.map((id, i) => <Cell key={i} id={id} />)}</div>
          <div className="mt-px flex">{row3.map((id, i) => <Cell key={i} id={id} />)}</div>
          <div className="mt-[5px] ml-px">{items.map((it) => <Track key={it.n} n={it.n} name={it.name} />)}</div>
          <div className="mt-[14px] mr-[8px] border-t border-[#505050] pl-[1px] text-[8.3px] leading-[12px] whitespace-pre text-[#999]">CPU: 2.9% - RAM: 652MB -  last save: 03:16</div>
        </div>
        <Arrange />
        <VScroll />
        <Master />
      </div>
    </div>
  );
}
